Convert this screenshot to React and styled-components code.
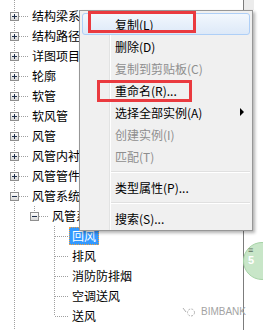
import React from "react";
import styled, { createGlobalStyle, css } from "styled-components";

const GlobalStyle = createGlobalStyle`
  html, body {
    margin: 0;
    padding: 0;
    background: #fff;
  }
  body {
    font-family: "Noto Sans CJK SC", "Liberation Sans", sans-serif;
    font-size: 12px;
    color: #000;
  }
`;

const Screen = styled.div`
  position: relative;
  display: flex;
  width: 263px;
  height: 330px;
  overflow: hidden;
  background: #fff;
`;

const Tree = styled.div`
  flex: 0 0 243px;
  padding-top: 6px;
  overflow: hidden;
  background-image: linear-gradient(to bottom, #a0a0a0 50%, transparent 50%);
  background-size: 1px 2px;
  background-position: 14px 0;
  background-repeat: repeat-y;
`;

const Row = styled.div`
  display: flex;
  align-items: center;
  height: 20px;
  padding-left: ${(p) => 4 + p.$depth * 20}px;
  white-space: nowrap;
`;

const JointSvg = styled.svg`
  flex: 0 0 25px;
  display: block;
`;

const Label = styled.span`
  height: 18px;
  line-height: 16px;
  box-sizing: border-box;
  padding: 0 2px;
  border: 1px solid transparent;
  ${(p) =>
    p.$selected &&
    css`
      background: #3399ff;
      color: #fff;
      border: 1px dotted #f0a040;
    `}
`;

const SideStrip = styled.div`
  flex: 0 0 10px;
  border-left: 1px solid #7c7c7c;
  background: linear-gradient(to bottom, #ececec 10px, #fff 10px);
`;

const Menu = styled.div`
  position: absolute;
  left: 79px;
  top: 10px;
  width: 174px;
  box-sizing: border-box;
  padding: 2px 2px 1px;
  background-color: #f0f0f0;
  background-image: linear-gradient(
    to right,
    transparent 29px,
    #e2e3e3 29px,
    #e2e3e3 30px,
    #fff 30px,
    #fff 31px,
    transparent 31px
  );
  border: 1px solid #979797;
  box-shadow: 2px 2px 3px rgba(0, 0, 0, 0.3);
`;

const Item = styled.div`
  display: flex;
  align-items: center;
  height: 22px;
  box-sizing: border-box;
  padding-left: 32px;
  border: 1px solid transparent;
  border-radius: 3px;
  color: ${(p) => (p.$disabled ? "#8e8e8e" : "#000")};
  white-space: nowrap;
  ${(p) =>
    p.$hover &&
    css`
      border-color: #aecff7;
      background: linear-gradient(to bottom, #f2f7fd, #dde9f8);
    `}
`;

const Arrow = styled.span`
  margin-left: auto;
  margin-right: 5px;
  width: 0;
  height: 0;
  border-top: 4px solid transparent;
  border-bottom: 4px solid transparent;
  border-left: 4px solid #000;
`;

const Separator = styled.div`
  height: 9px;
  margin-left: 29px;
  background: linear-gradient(
    to bottom,
    transparent 4px,
    #e0e0e0 4px,
    #e0e0e0 5px,
    #fff 5px,
    #fff 6px,
    transparent 6px
  );
`;

const Mark = styled.div`
  position: absolute;
  left: ${(p) => p.$x}px;
  top: ${(p) => p.$y}px;
  width: ${(p) => p.$w}px;
  height: ${(p) => p.$h}px;
  box-sizing: border-box;
  border: 3px solid #ea3a3f;
`;

const Bubble = styled.div`
  position: absolute;
  left: 243px;
  top: 242px;
  width: 38px;
  height: 38px;
  box-sizing: border-box;
  border-radius: 50%;
  background: #c8e6c8;
  border: 1px solid #a6d3a6;
  display: flex;
  flex-direction: column;
  padding: 2px 0 0 4px;
  font-family: "Liberation Sans", sans-serif;
  line-height: 10px;
`;

const BubbleGlyph = styled.span`
  font-size: ${(p) => p.$size}px;
  font-weight: bold;
  color: ${(p) => p.$color};
`;

const Watermark = styled.div`
  position: absolute;
  left: 182px;
  top: 306px;
  display: flex;
  align-items: center;
  gap: 5px;
  font-family: "Liberation Sans", sans-serif;
  font-size: 10px;
  color: #a3a3a3;
`;

const Joint = ({ depth, box, open, last }) => (
  <JointSvg width="25" height="20" viewBox="0 0 25 20">
    {depth > 0 && (
      <line
        x1="10.5"
        y1="0"
        x2="10.5"
        y2={last ? 10 : 20}
        stroke="#a0a0a0"
        strokeDasharray="1 1"
      />
    )}
    <line
      x1={box ? 15 : 11}
      y1="10.5"
      x2="25"
      y2="10.5"
      stroke="#a0a0a0"
      strokeDasharray="1 1"
    />
    {box && (
      <g shapeRendering="crispEdges">
        <defs>
          <linearGradient id="boxfill" x1="0" y1="0" x2="0" y2="1">
            <stop offset="0" stopColor="#ffffff" />
            <stop offset="1" stopColor="#d6d6d6" />
          </linearGradient>
        </defs>
        <rect x="6.5" y="6.5" width="8" height="8" fill="url(#boxfill)" stroke="#8f8f8f" />
        <line x1="8" y1="10.5" x2="13" y2="10.5" stroke="#1e2f4a" />
        {!open && <line x1="10.5" y1="8" x2="10.5" y2="13" stroke="#1e2f4a" />}
      </g>
    )}
  </JointSvg>
);

const nodes = [
  { depth: 0, text: "结构梁系统", box: true },
  { depth: 0, text: "结构路径钢筋", box: true },
  { depth: 0, text: "详图项目", box: true },
  { depth: 0, text: "轮廓", box: true },
  { depth: 0, text: "软管", box: true },
  { depth: 0, text: "软风管", box: true },
  { depth: 0, text: "风管", box: true },
  { depth: 0, text: "风管内衬", box: true },
  { depth: 0, text: "风管管件", box: true },
  { depth: 0, text: "风管系统", box: true, open: true },
  { depth: 1, text: "风管系统", box: true, open: true, last: true },
  { depth: 2, text: "回风", selected: true },
  { depth: 2, text: "排风" },
  { depth: 2, text: "消防防排烟" },
  { depth: 2, text: "空调送风" },
  { depth: 2, text: "送风", last: true },
];

const menu = [
  { text: "复制(L)", hover: true },
  { text: "删除(D)" },
  { text: "复制到剪贴板(C)", disabled: true },
  { text: "重命名(R)..." },
  { text: "选择全部实例(A)", sub: true },
  { text: "创建实例(I)", disabled: true },
  { text: "匹配(T)", disabled: true },
  { sep: true },
  { text: "类型属性(P)..." },
  { sep: true },
  { text: "搜索(S)..." },
];

const App = () => (
  <>
    <GlobalStyle />
    <Screen>
      <Tree>
        {nodes.map((n, i) => (
          <Row key={i} $depth={n.depth}>
            <Joint depth={n.depth} box={n.box} open={n.open} last={n.last} />
            <Label $selected={n.selected}>{n.text}</Label>
          </Row>
        ))}
      </Tree>
      <SideStrip />

      <Menu>
        {menu.map((m, i) =>
          m.sep ? (
            <Separator key={i} />
          ) : (
            <Item key={i} $hover={m.hover} $disabled={m.disabled}>
              {m.text}
              {m.sub && <Arrow />}
            </Item>
          )
        )}
      </Menu>

      <Mark $x={88} $y={11} $w={108} $h={22} />
      <Mark $x={97} $y={80} $w={95} $h={22} />

      <Bubble>
        <BubbleGlyph $size={9} $color="#5f6f5f">≡</BubbleGlyph>
        <BubbleGlyph $size={11} $color="#fff">5</BubbleGlyph>
      </Bubble>

      <Watermark>
        <svg width="14" height="10" viewBox="0 0 14 10">
          <g fill="none" stroke="#b0b0b0" strokeWidth="1">
            <path d="M1 1 L4 5" />
            <circle cx="9" cy="5.5" r="3.5" strokeDasharray="2 1.3" />
          </g>
        </svg>
        BIMBANK
      </Watermark>
    </Screen>
  </>
);

export default App;
